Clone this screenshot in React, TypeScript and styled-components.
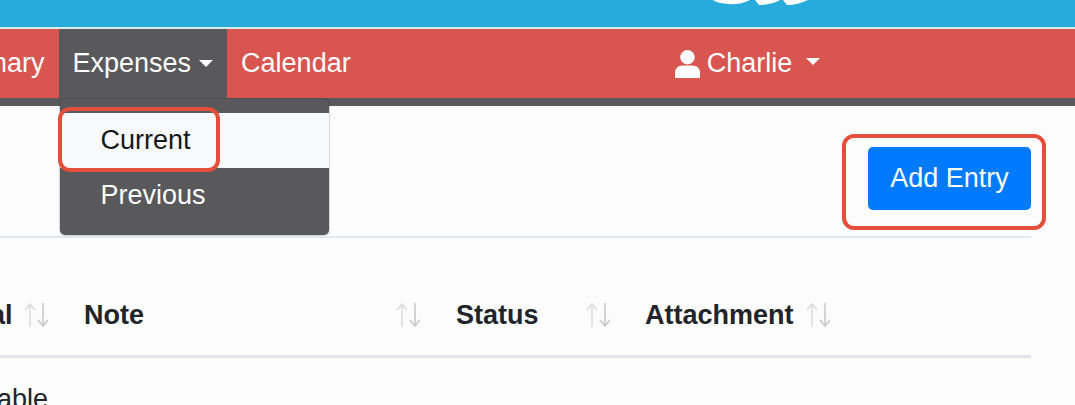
import React from 'react';
import styled, { createGlobalStyle } from 'styled-components';

const GlobalStyle = createGlobalStyle`
  html, body {
    margin: 0;
    padding: 0;
    background: #fcfcfc;
    overflow: hidden;
  }
  body {
    font-family: "Liberation Sans", Arial, sans-serif;
    color: #212529;
  }
`;

const Page = styled.div`
  width: 1075px;
  height: 405px;
  overflow: hidden;
  position: relative;
`;

const Banner = styled.div`
  height: 27px;
  background: #27abdd;
  border-bottom: 2px solid #d5eef8;
  display: flex;
  justify-content: flex-end;
  padding-right: 255px;
`;

const Logo = styled.svg`
  width: 110px;
  height: 6px;
  display: block;
`;

const NavBar = styled.nav`
  height: 69px;
  background: #d95550;
  border-bottom: 8px solid #59585a;
  display: flex;
  font-size: 27px;
  color: #fff;
  line-height: 69px;
`;

const NavGroup = styled.div`
  display: flex;
  margin-left: -85px;
`;

const NavItem = styled.div<{ $active?: boolean }>`
  position: relative;
  padding: 0 14px;
  height: 69px;
  white-space: nowrap;
  background: ${p => (p.$active ? '#59585a' : 'transparent')};
`;

const Caret = styled.span`
  display: inline-block;
  margin-left: 8px;
  vertical-align: 5px;
  border-top: 7px solid #fff;
  border-left: 7px solid transparent;
  border-right: 7px solid transparent;
`;

const UserMenu = styled.div`
  margin-left: 310px;
  display: flex;
  align-items: center;
  gap: 7px;
  height: 69px;
`;

const UserCaret = styled(Caret)`
  margin-left: 7px;
  margin-bottom: 4px;
`;

const Dropdown = styled.div`
  position: absolute;
  left: 0;
  top: 69px;
  width: 271px;
  height: 138px;
  box-sizing: border-box;
  background: #59585a;
  background-clip: padding-box;
  border: 1px solid rgba(0, 0, 0, 0.15);
  border-radius: 6px;
  padding-top: 14px;
  line-height: 55px;
`;

const DropdownItem = styled.div<{ $selected?: boolean }>`
  height: 55px;
  padding-left: 41px;
  background: ${p => (p.$selected ? '#f8f9fa' : 'transparent')};
  color: ${p => (p.$selected ? '#16181b' : '#fff')};
`;

const Highlight = styled.div`
  position: absolute;
  border: 4px solid #e34f3b;
  border-radius: 12px;
  box-sizing: border-box;
  pointer-events: none;
`;

const CurrentHighlight = styled(Highlight)`
  left: -2px;
  top: 8px;
  width: 162px;
  height: 65px;
`;

const Toolbar = styled.div`
  margin-right: 44px;
  height: 132px;
  box-sizing: border-box;
  border-bottom: 2px solid #e4e7ea;
  display: flex;
  justify-content: flex-end;
  padding-top: 41px;
`;

const AddButton = styled.button`
  position: relative;
  width: 163px;
  height: 63px;
  border: none;
  border-radius: 5px;
  background: #007bff;
  color: #fff;
  font: 27px "Liberation Sans", Arial, sans-serif;
  padding: 0;
`;

const ButtonHighlight = styled(Highlight)`
  left: -26px;
  top: -13px;
  width: 204px;
  height: 96px;
`;

const TableHead = styled.div`
  margin-right: 44px;
  height: 120px;
  box-sizing: border-box;
  border-bottom: 3px solid #e1e5e9;
  display: flex;
  align-items: center;
  padding-top: 37px;
  font-size: 27px;
  font-weight: 700;
`;

const Column = styled.div<{ $width: number; $offset: number }>`
  width: ${p => p.$width}px;
  margin-left: ${p => p.$offset}px;
  display: flex;
  justify-content: space-between;
  align-items: center;
  flex: none;
`;

const SortIcon = styled.svg`
  width: 24px;
  height: 26px;
  flex: none;
  display: block;
`;

const TableBody = styled.div`
  font-size: 27px;
  line-height: 30px;
  padding-top: 26px;
  margin-left: -61px;
`;

const Sort = () => (
  <SortIcon viewBox="0 0 24 26" fill="none" strokeWidth="1.6">
    <path d="M6 25V2M1 8l5-6 5 6" stroke="#dcdcdc" />
    <path d="M19 1v23M14 18l5 6 5-6" stroke="#c8c8c8" />
  </SortIcon>
);

const UserIcon = () => (
  <svg width="25" height="28" viewBox="0 0 26 29" fill="#fff">
    <circle cx="13" cy="7.5" r="7.5" />
    <path d="M0 29v-5c0-5 3-8 8-8h10c5 0 8 3 8 8v5z" />
  </svg>
);

const App: React.FC = () => {
  return (
    <Page>
      <GlobalStyle />
      <Banner>
        <Logo viewBox="0 0 110 6">
          <path d="M3 0C10 5 30 6 40 0z" fill="#fff" />
          <path d="M45 0H70C66 3 56 5 49 5z" fill="#fff" />
          <path d="M73 0H98C92 3 84 5 77 5z" fill="#fff" />
        </Logo>
      </Banner>
      <NavBar>
        <NavGroup>
          <NavItem>Summary</NavItem>
          <NavItem $active>
            Expenses<Caret />
            <Dropdown>
              <DropdownItem $selected>Current</DropdownItem>
              <DropdownItem>Previous</DropdownItem>
              <CurrentHighlight />
            </Dropdown>
          </NavItem>
          <NavItem>Calendar</NavItem>
        </NavGroup>
        <UserMenu>
          <UserIcon />
          Charlie
          <UserCaret />
        </UserMenu>
      </NavBar>
      <Toolbar>
        <AddButton>
          Add Entry
          <ButtonHighlight />
        </AddButton>
      </Toolbar>
      <TableHead>
        <Column $width={98} $offset={-50}>
          Total<Sort />
        </Column>
        <Column $width={336} $offset={36}>
          Note<Sort />
        </Column>
        <Column $width={154} $offset={36}>
          Status<Sort />
        </Column>
        <Column $width={185} $offset={35}>
          Attachment<Sort />
        </Column>
      </TableHead>
      <TableBody>Available</TableBody>
    </Page>
  );
};

export default App;
